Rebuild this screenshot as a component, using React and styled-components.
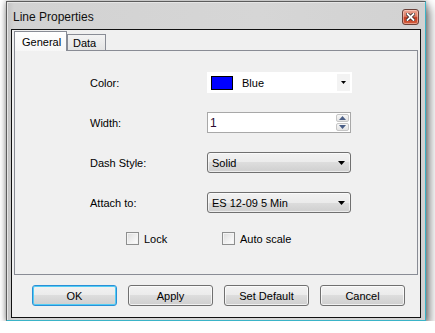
import React from 'react';
import styled, { createGlobalStyle, css } from 'styled-components';

const Global = createGlobalStyle`
  html, body { margin: 0; padding: 0; background: #fff; }
  body { font-family: "Liberation Sans", Arial, sans-serif; font-size: 11px; color: #000; }
  * { box-sizing: border-box; }
`;

const Window = styled.div`
  width: 420px;
  height: 320px;
  margin: 1px 0 0 6px;
  display: flex;
  flex-direction: column;
  border: 1px solid #5c5c5c;
  border-right-color: #3ab4c8;
  border-bottom-color: #3ab4c8;
  padding: 0 4px 2px 4px;
  background: linear-gradient(to right, #c2c2c2 0px, #d2d2d2 7px, #d6d6d6 60%, #d2d2d2 100%);
  box-shadow: inset 1px 1px 0 #e6e6e6, 0 0 6px rgba(0,0,0,0.4), 4px 6px 10px rgba(0,0,0,0.45);
`;

const TitleBar = styled.div`
  height: 27px;
  display: flex;
  align-items: center;
  justify-content: space-between;
  padding: 2px 2px 0 2px;
`;

const Title = styled.span`
  font-size: 12px;
  color: #101010;
`;

const CloseButton = styled.div`
  width: 17px;
  height: 16px;
  border: 1px solid #6a4038;
  border-radius: 3px;
  background: linear-gradient(to bottom, #eba896 0%, #dc7a62 45%, #c2391f 55%, #d3603f 100%);
  box-shadow: inset 0 0 0 1px rgba(255,220,210,0.5);
  display: flex;
  align-items: center;
  justify-content: center;
`;

const Client = styled.div`
  height: 289px;
  border: 1px solid #111;
  background: #f0f0f0;
  display: flex;
  flex-direction: column;
  padding: 1px 2px 0 2px;
`;

const TabStrip = styled.div`
  display: flex;
  align-items: flex-end;
  height: 20px;
  margin-bottom: -1px;
  position: relative;
  z-index: 1;
`;

const Tab = styled.div`
  border: 1px solid #898c95;
  border-bottom: none;
  display: flex;
  align-items: center;
  ${p => p.$active ? css`
    width: 53px;
    height: 20px;
    padding: 1px 0 0 7px;
    background: linear-gradient(to bottom, #ffffff, #f6f6f6);
  ` : css`
    width: 39px;
    height: 17px;
    padding: 0 0 0 5px;
    background: linear-gradient(to bottom, #f3f3f3, #e4e4e4);
    border-bottom: 1px solid #898c95;
  `}
`;

const Panel = styled.div`
  height: 225px;
  border: 1px solid #898c95;
  background: #f0f0f0;
  padding: 21px 0 0 75px;
`;

const Form = styled.div`
  display: grid;
  grid-template-columns: 117px 145px;
  grid-auto-rows: 21px;
  row-gap: 19px;
  align-items: center;
`;

const Label = styled.span``;

const ColorCombo = styled.div`
  height: 21px;
  background: #fff;
  display: flex;
  align-items: center;
  padding-left: 4px;
`;

const Swatch = styled.div`
  width: 22px;
  height: 14px;
  border: 1px solid #000;
  background: ${p => p.$color};
`;

const ComboText = styled.span`
  margin-left: 9px;
  flex: 1;
`;

const ArrowBox = styled.div`
  width: 13px;
  height: 17px;
  margin-right: 2px;
  background: #f3f3f3;
  display: flex;
  align-items: center;
  justify-content: center;
`;

const SpinBox = styled.div`
  width: 144px;
  height: 21px;
  border: 1px solid #a8a8a8;
  background: #fff;
  display: flex;
  align-items: center;
  padding: 1px 1px 1px 2px;
`;

const SpinText = styled.span`
  flex: 1;
  font-size: 12px;
  color: #2a0a30;
`;

const SpinButtons = styled.div`
  width: 13px;
  height: 100%;
  display: flex;
  flex-direction: column;
  gap: 1px;
`;

const SpinButton = styled.div`
  flex: 1;
  border: 1px solid #c6c6c6;
  border-radius: 2px;
  background: linear-gradient(to bottom, #f7f7f7, #e4e4e4);
  display: flex;
  align-items: center;
  justify-content: center;
`;

const Select = styled.div`
  width: 144px;
  height: 21px;
  border: 1px solid #707070;
  border-radius: 3px;
  background: linear-gradient(to bottom, #f2f2f2 0%, #ebebeb 50%, #dddddd 50%, #cfcfcf 100%);
  box-shadow: inset 0 0 0 1px rgba(255,255,255,0.6);
  display: flex;
  align-items: center;
  justify-content: space-between;
  padding: 0 5px 0 4px;
`;

const CheckRow = styled.div`
  display: flex;
  margin-top: 19px;
  padding-left: 36px;
  height: 13px;
  align-items: center;
`;

const CheckItem = styled.label`
  display: flex;
  align-items: center;
  width: ${p => p.$w || 'auto'};
`;

const Box = styled.span`
  width: 13px;
  height: 13px;
  border: 1px solid #8e8f8f;
  background: linear-gradient(135deg, #dcdcdc 0%, #f2f2f2 60%, #ffffff 100%);
  box-shadow: inset 0 0 0 1px #f4f4f4;
  margin-right: 5px;
`;

const ButtonRow = styled.div`
  display: flex;
  gap: 11px;
  padding: 10px 0 0 18px;
`;

const Button = styled.div`
  width: 85px;
  height: 21px;
  border: 1px solid #707070;
  border-radius: 3px;
  background: linear-gradient(to bottom, #f2f2f2 0%, #ebebeb 50%, #dddddd 50%, #cfcfcf 100%);
  box-shadow: inset 0 0 0 1px rgba(255,255,255,0.7);
  display: flex;
  align-items: center;
  justify-content: center;
  ${p => p.$default && css`
    border-color: #2b8fd6;
    box-shadow: inset 0 0 0 1px #52cdf4;
  `}
`;

const DownArrow = ({ w = 7, h = 4 }) => (
  <svg width={w} height={h} viewBox={`0 0 ${w} ${h}`}>
    <path d={`M0 0 L${w} 0 L${w / 2} ${h} Z`} fill="#000" />
  </svg>
);

const SpinArrow = ({ up }) => (
  <svg width="7" height="4" viewBox="0 0 7 4">
    <path d={up ? 'M0 4 L7 4 L3.5 0 Z' : 'M0 0 L7 0 L3.5 4 Z'} fill="#4a5e86" />
  </svg>
);

const CloseIcon = () => (
  <svg width="9" height="8" viewBox="0 0 9 8">
    <path d="M1.5 1 L7.5 7 M7.5 1 L1.5 7" stroke="#3a2a2a" strokeWidth="3.4" strokeLinecap="square" />
    <path d="M1.5 1 L7.5 7 M7.5 1 L1.5 7" stroke="#ffffff" strokeWidth="1.8" strokeLinecap="square" />
  </svg>
);

export default function App() {
  return (
    <>
      <Global />
      <Window>
        <TitleBar>
          <Title>Line Properties</Title>
          <CloseButton><CloseIcon /></CloseButton>
        </TitleBar>
        <Client>
          <TabStrip>
            <Tab $active>General</Tab>
            <Tab>Data</Tab>
          </TabStrip>
          <Panel>
            <Form>
              <Label>Color:</Label>
              <ColorCombo>
                <Swatch $color="#0000ff" />
                <ComboText>Blue</ComboText>
                <ArrowBox><DownArrow w={5} h={3} /></ArrowBox>
              </ColorCombo>

              <Label>Width:</Label>
              <SpinBox>
                <SpinText>1</SpinText>
                <SpinButtons>
                  <SpinButton><SpinArrow up /></SpinButton>
                  <SpinButton><SpinArrow /></SpinButton>
                </SpinButtons>
              </SpinBox>

              <Label>Dash Style:</Label>
              <Select>
                <span>Solid</span>
                <DownArrow />
              </Select>

              <Label>Attach to:</Label>
              <Select>
                <span>ES 12-09 5 Min</span>
                <DownArrow />
              </Select>
            </Form>
            <CheckRow>
              <CheckItem $w="96px"><Box />Lock</CheckItem>
              <CheckItem><Box />Auto scale</CheckItem>
            </CheckRow>
          </Panel>
          <ButtonRow>
            <Button $default>OK</Button>
            <Button>Apply</Button>
            <Button>Set Default</Button>
            <Button>Cancel</Button>
          </ButtonRow>
        </Client>
      </Window>
    </>
  );
}
